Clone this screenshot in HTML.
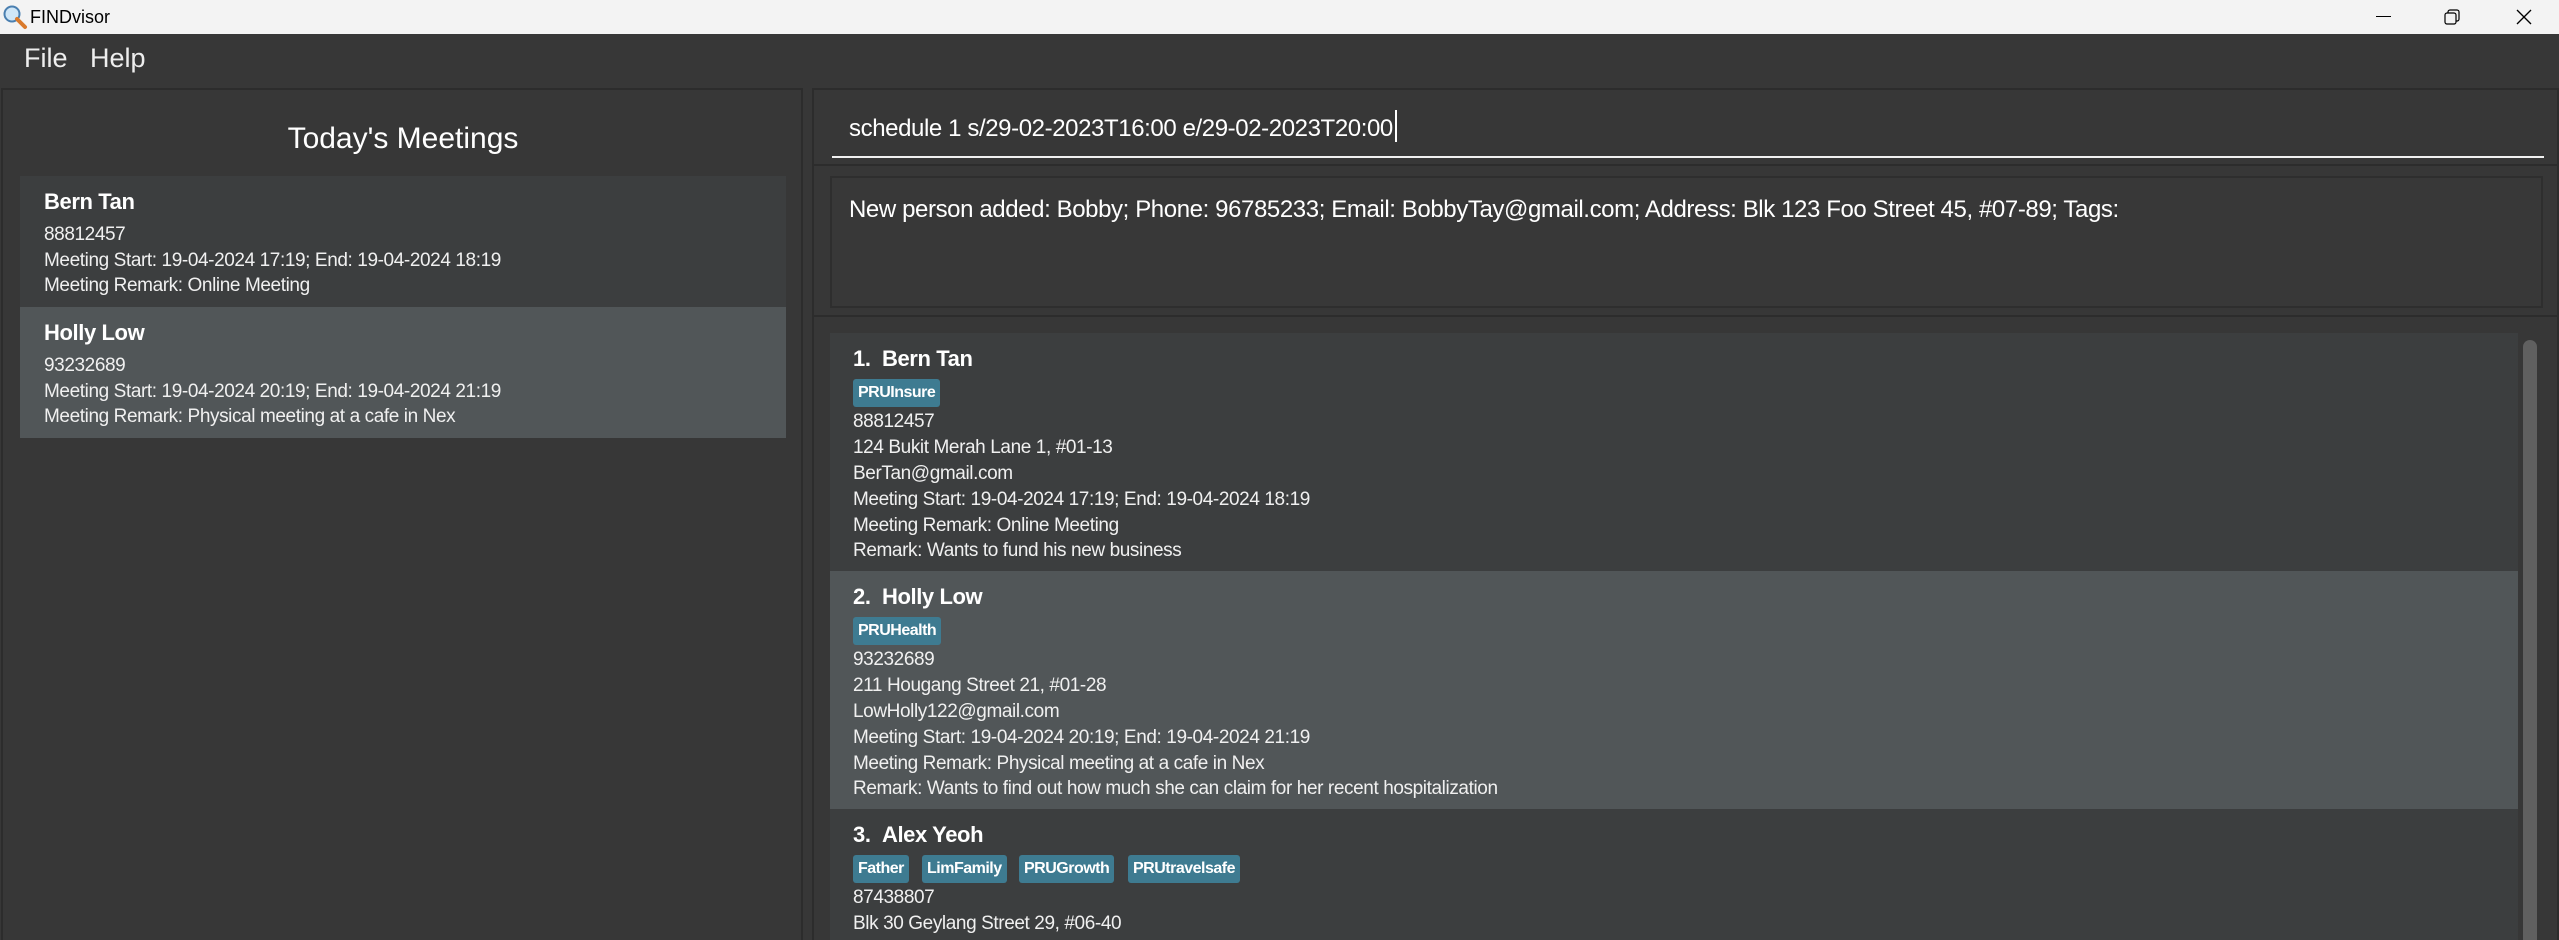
<!DOCTYPE html>
<html><head><meta charset="utf-8"><style>
*{margin:0;padding:0;box-sizing:border-box}
html,body{width:2559px;height:940px;overflow:hidden}
body{background:#373737;font-family:"Liberation Sans",sans-serif;color:#fff}
#w{position:relative;width:2559px;height:940px;overflow:hidden}
.a{position:absolute}
.tb{left:0;top:0;width:2559px;height:34px;background:#f3f3f3;color:#000}
.mb{left:0;top:34px;width:2559px;height:55px;background:#373737}
.panel{background:#373737;border:2px solid #2c2c2c}
.t{position:absolute;white-space:nowrap;letter-spacing:-0.4px}
.n{font-weight:bold;font-size:22px}
.l{font-size:19px;color:#f0f0f0}
.card{position:absolute;background:#3c3e3f}
.sel{background:#515658}
.tag{position:absolute;height:28px;background:#3e7b91;border-radius:3px;font-weight:bold;font-size:16px;line-height:28px;padding:0 5px;color:#fff;white-space:nowrap;letter-spacing:-0.5px}
</style></head><body><div id="w">
<div class="a tb">
 <svg class="a" style="left:2px;top:4px" width="26" height="26" viewBox="0 0 26 26"><circle cx="10" cy="10" r="7.5" fill="#cfe6f7" stroke="#4a7fb0" stroke-width="2"/><line x1="15" y1="15" x2="23" y2="23" stroke="#d9792b" stroke-width="4" stroke-linecap="round"/></svg>
 <div class="t" style="left:30px;top:7px;font-size:18px;letter-spacing:0">FINDvisor</div>
 <div class="a" style="left:2376px;top:16px;width:15px;height:1px;background:#000"></div>
 <svg class="a" style="left:2444px;top:9px" width="17" height="17" viewBox="0 0 17 17" fill="none" stroke="#000" stroke-width="1.2"><rect x="1" y="4" width="11" height="11" rx="2"/><path d="M4 4V3a2 2 0 0 1 2-2h7a2 2 0 0 1 2 2v7a2 2 0 0 1-2 2h-1"/></svg>
 <svg class="a" style="left:2516px;top:9px" width="16" height="16" viewBox="0 0 16 16" stroke="#000" stroke-width="1.3"><line x1="1" y1="1" x2="15" y2="15"/><line x1="15" y1="1" x2="1" y2="15"/></svg>
</div>
<div class="a mb">
 <div class="t" style="left:24px;top:9px;font-size:27px;color:#eee;letter-spacing:0">File</div>
 <div class="t" style="left:90px;top:9px;font-size:27px;color:#eee;letter-spacing:0">Help</div>
</div>
<div class="a panel" style="left:1px;top:88px;width:802px;height:900px">
 <div class="t" style="left:0;width:800px;text-align:center;top:32px;font-size:30px;color:#fff;letter-spacing:0">Today's Meetings</div>
 <div class="card" style="left:17px;top:86px;width:766px;height:131px">
  <div class="t n" style="left:24px;top:13px">Bern Tan</div>
  <div class="t l" style="left:24px;top:48px">88812457</div>
  <div class="t l" style="left:24px;top:74px">Meeting Start: 19-04-2024 17:19; End: 19-04-2024 18:19</div>
  <div class="t l" style="left:24px;top:99px">Meeting Remark: Online Meeting</div>
 </div>
 <div class="card sel" style="left:17px;top:217px;width:766px;height:131px">
  <div class="t n" style="left:24px;top:13px">Holly Low</div>
  <div class="t l" style="left:24px;top:48px">93232689</div>
  <div class="t l" style="left:24px;top:74px">Meeting Start: 19-04-2024 20:19; End: 19-04-2024 21:19</div>
  <div class="t l" style="left:24px;top:99px">Meeting Remark: Physical meeting at a cafe in Nex</div>
 </div>
</div>
<div class="a panel" style="left:812px;top:88px;width:1747px;height:78px">
 <div class="t" style="left:35px;top:25px;font-size:24px;color:#fff">schedule 1 s/29-02-2023T16:00 e/29-02-2023T20:00</div>
 <div class="a" style="left:581px;top:20px;width:2px;height:32px;background:#fff"></div>
 <div class="a" style="left:18px;top:66px;width:1712px;height:2px;background:#f0f0f0"></div>
</div>
<div class="a panel" style="left:812px;top:164px;width:1747px;height:153px">
 <div class="a" style="left:16px;top:10px;width:1713px;height:132px;border:2px solid #2e2e2e;background:#383838"></div>
 <div class="t" style="left:35px;top:30px;font-size:24px;color:#fff">New person added: Bobby; Phone: 96785233; Email: BobbyTay@gmail.com; Address: Blk 123 Foo Street 45, #07-89; Tags:</div>
</div>
<div class="a panel" style="left:812px;top:315px;width:1747px;height:700px"></div>
<div class="card" style="left:830px;top:333px;width:1688px;height:238px">
 <div class="t n" style="left:23px;top:13px">1.&nbsp;&nbsp;Bern Tan</div>
 <div class="tag" style="left:23px;top:46px">PRUInsure</div>
 <div class="t l" style="left:23px;top:78px">88812457</div>
 <div class="t l" style="left:23px;top:104px">124 Bukit Merah Lane 1, #01-13</div>
 <div class="t l" style="left:23px;top:130px">BerTan@gmail.com</div>
 <div class="t l" style="left:23px;top:156px">Meeting Start: 19-04-2024 17:19; End: 19-04-2024 18:19</div>
 <div class="t l" style="left:23px;top:182px">Meeting Remark: Online Meeting</div>
 <div class="t l" style="left:23px;top:207px">Remark: Wants to fund his new business</div>
</div>
<div class="card sel" style="left:830px;top:571px;width:1688px;height:238px">
 <div class="t n" style="left:23px;top:13px">2.&nbsp;&nbsp;Holly Low</div>
 <div class="tag" style="left:23px;top:46px">PRUHealth</div>
 <div class="t l" style="left:23px;top:78px">93232689</div>
 <div class="t l" style="left:23px;top:104px">211 Hougang Street 21, #01-28</div>
 <div class="t l" style="left:23px;top:130px">LowHolly122@gmail.com</div>
 <div class="t l" style="left:23px;top:156px">Meeting Start: 19-04-2024 20:19; End: 19-04-2024 21:19</div>
 <div class="t l" style="left:23px;top:182px">Meeting Remark: Physical meeting at a cafe in Nex</div>
 <div class="t l" style="left:23px;top:207px">Remark: Wants to find out how much she can claim for her recent hospitalization</div>
</div>
<div class="card" style="left:830px;top:809px;width:1688px;height:131px">
 <div class="t n" style="left:23px;top:13px">3.&nbsp;&nbsp;Alex Yeoh</div>
 <div class="tag" style="left:23px;top:46px">Father</div>
 <div class="tag" style="left:92px;top:46px">LimFamily</div>
 <div class="tag" style="left:189px;top:46px">PRUGrowth</div>
 <div class="tag" style="left:298px;top:46px">PRUtravelsafe</div>
 <div class="t l" style="left:23px;top:78px">87438807</div>
 <div class="t l" style="left:23px;top:104px">Blk 30 Geylang Street 29, #06-40</div>
</div>
<div class="a" style="left:2523px;top:340px;width:14px;height:600px;background:#606060;border-radius:7px 7px 0 0"></div>
</div></body></html>
